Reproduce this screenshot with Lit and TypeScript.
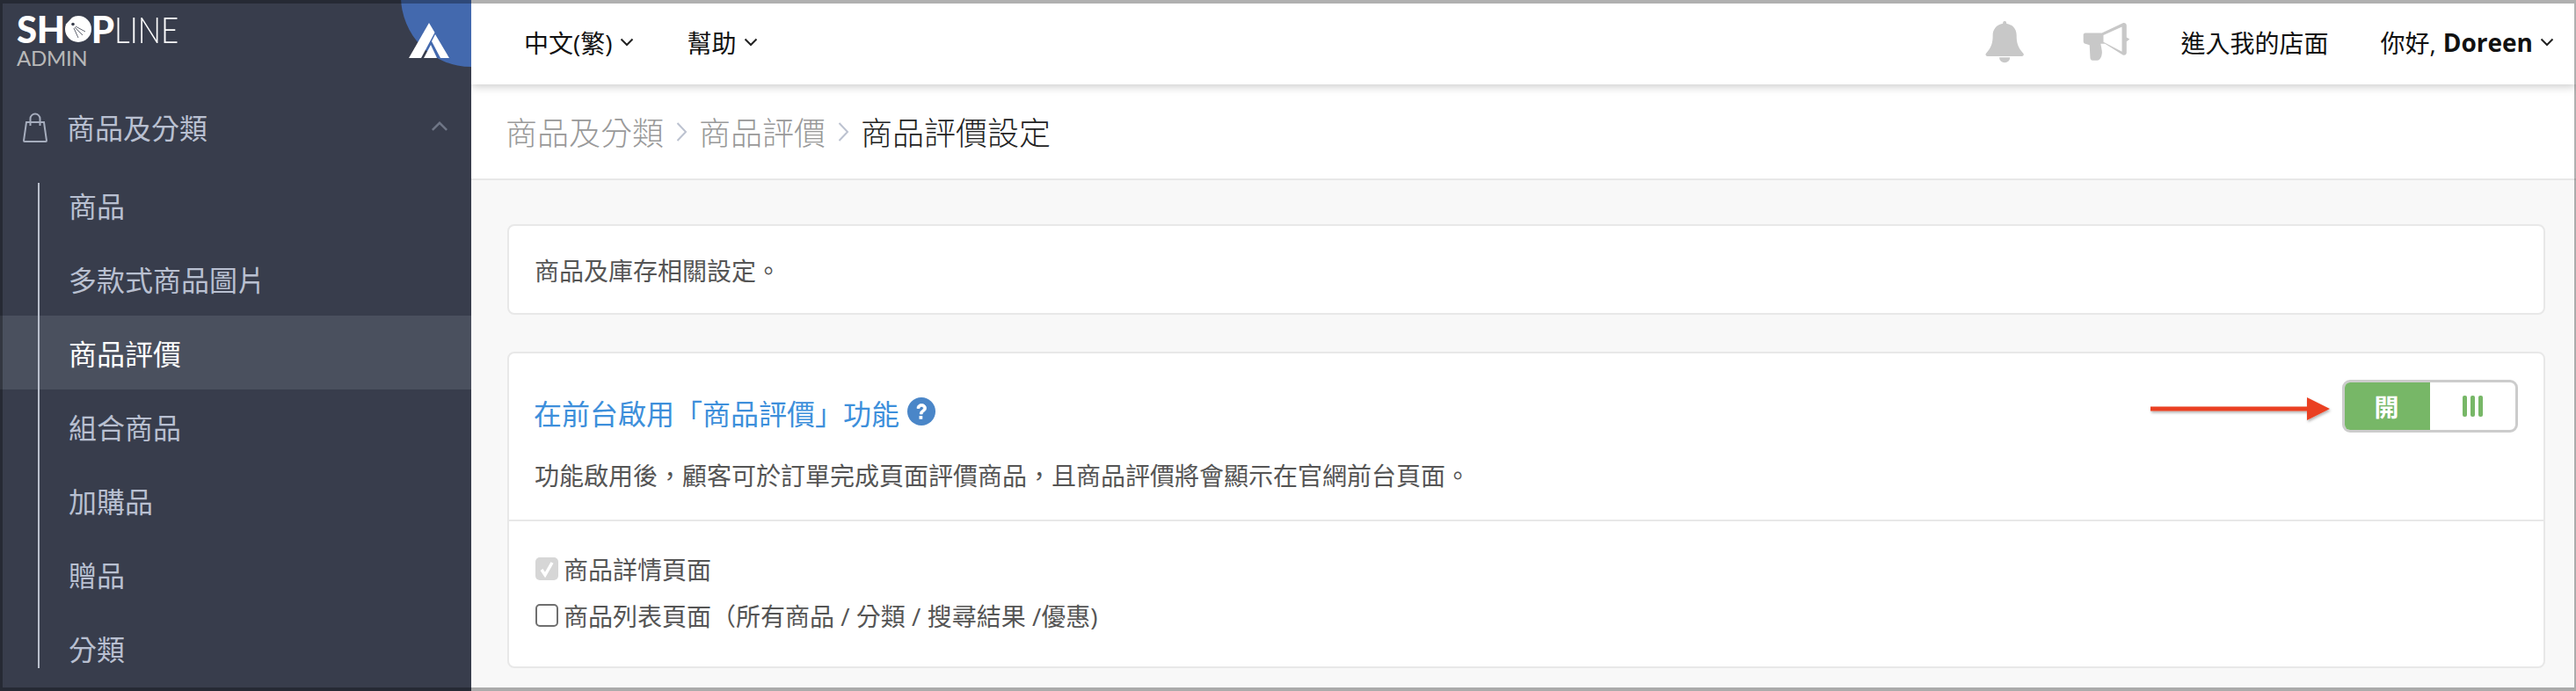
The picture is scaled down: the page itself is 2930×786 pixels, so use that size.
import { LitElement, html, css } from "lit";
import { customElement } from "lit/decorators.js";

const chevron = (cls = "chev") => html`<svg class=${cls} viewBox="0 0 16 10"><path d="M1.500 1.500 8 8l6.500-6.500" fill="none" stroke="currentColor" stroke-width="2"/></svg>`;

@customElement("app-root")
export class AppRoot extends LitElement {
  static styles = css`
    :host { display: block; width: 2930px; height: 786px; position: relative; overflow: hidden; background: #f8f8f8;
      font-family: "Open Sans", "Noto Sans CJK TC", sans-serif; color: #222; }
    * { box-sizing: border-box; }
    .frame { position: absolute; inset: 0; border-style: solid; border-color: rgba(0,0,0,.31); border-width: 4px 2px 4px 3px; pointer-events: none; z-index: 9; }
    .page { display: grid; grid-template-columns: 536px 1fr; height: 786px; }
    .side { background: #383d4c; color: #b9c0d1; position: relative; overflow: hidden; z-index: 3; }
    .brand { height: 96px; padding: 18px 0 0 19px; }
    .word { display: flex; align-items: center; height: 30px; color: #fff; font-family: Lato, sans-serif; font-size: 42px; line-height: 30px; }
    .word b { font-weight: 900; letter-spacing: -.5px; }
    .word span { font-weight: 300; margin-left: 1px; transform: scaleX(.83); transform-origin: left center; }
    .word svg { width: 30px; height: 30px; flex: none; }
    .admin { font-family: Lato, sans-serif; font-size: 24px; line-height: 24px; margin-top: 6px; color: #b8b8b8; letter-spacing: -.3px; }
    .circle { position: absolute; left: 456px; top: -84px; width: 160px; height: 160px; border-radius: 50%; background: #4369ae; }
    .mark { position: absolute; left: 465px; top: 26px; width: 46px; height: 40px; }
    .group { display: flex; align-items: center; height: 96px; padding-left: 26px; padding-right: 26px; font-size: 32px; }
    .group .bag { width: 28px; height: 34px; margin-right: 22px; margin-top: 2px; flex: none; }
    .group span { flex: 1; }
    .group .up { width: 20px; height: 13px; color: #6f7686; transform: rotate(180deg); margin-top: -2px; }
    .items { position: relative; margin-top: -1px; }
    .items::before { content: ""; position: absolute; left: 43px; top: 17px; bottom: 19px; width: 2px; background: #b9bfcc; z-index: 1; }
    .item { height: 84px; display: flex; align-items: center; padding-left: 78px; font-size: 32px; }
    .item.on { background: #4a505e; color: #fff; }
    .main { display: flex; flex-direction: column; min-width: 0; }
    .top { height: 96px; flex: none; background: #fff; box-shadow: 0 2px 10px rgba(0,0,0,.22); display: flex; align-items: center; padding: 0 25px 0 60px; font-size: 28px; position: relative; z-index: 2; color: #111; }
    .chev { width: 16px; height: 10px; margin-left: 8px; color: #222; }
    .nav { display: flex; align-items: center; }
    .nav + .nav { margin-left: 61px; }
    .spacer { flex: 1; }
    .bell { width: 46px; height: 48px; margin-right: 65px; }
    .horn { width: 54px; height: 46px; margin-right: 57px; }
    .nav.hello { margin-left: 59px; }
    .hello b { font-weight: 700; margin-left: 8px; }
    .crumb { height: 109px; flex: none; background: #fff; border-bottom: 2px solid #e8e8e8; display: flex; align-items: center; padding-left: 39px; font-size: 36px; font-weight: 300; color: #999; }
    .crumb .cur { color: #222; }
    .crumb svg { width: 13px; height: 24px; margin: 0 13px 0 14px; color: #bcc2d0; }
    .content { padding: 50px 35px 0 41px; display: flex; flex-direction: column; gap: 42px; }
    .card { background: #fff; border: 2px solid #e8e8e8; border-radius: 8px; }
    .note { height: 103px; display: flex; align-items: center; padding-left: 29px; font-size: 28px; color: #555; }
    .feature { height: 360px; display: flex; flex-direction: column; }
    .head { height: 191px; border-bottom: 2px solid #e8e8e8; padding: 29px 29px 0 29px; flex: none; }
    .row { display: flex; align-items: center; height: 62px; }
    .title { display: flex; align-items: center; font-size: 32px; color: #3d8fdb; margin: 14px 0 0 -1px; }
    .q { width: 32px; height: 32px; margin-left: 9px; margin-top: -2px; }
    .arrow { width: 210px; height: 40px; margin-right: 11px; margin-top: 6px; }
    .toggle { width: 200px; height: 60px; border: 3px solid #ccc; border-radius: 9px; overflow: hidden; display: grid; grid-template-columns: 97px 1fr; }
    .ton { background: #77b767; color: #fff; font-weight: 700; font-size: 28px; display: flex; align-items: center; justify-content: center; padding-right: 2px; }
    .toff { display: flex; align-items: center; justify-content: center; gap: 4px; }
    .toff i { width: 5px; height: 24px; background: #77b767; border-radius: 2px; }
    .desc { font-size: 28px; color: #555; line-height: 40px; margin-top: 28px; }
    .checks { padding: 34px 0 0 30px; display: flex; flex-direction: column; gap: 13px; }
    .check { display: flex; align-items: center; height: 40px; font-size: 28px; color: #555; }
    .box { width: 26px; height: 26px; border-radius: 5px; margin-right: 6px; flex: none; border: 2px solid #6f6f6f; background: #fff; }
    .box.dis { background: #d6d6d6; border: 0; display: flex; align-items: center; justify-content: center; }
    .box.dis svg { width: 18px; height: 20px; }
  `;

  render() {
    const items = ["商品", "多款式商品圖片", "商品評價", "組合商品", "加購品", "贈品", "分類"];
    return html`
      <div class="page">
        <aside class="side">
          <div class="circle"></div>
          <svg class="mark" viewBox="465 26 46 40" fill="#fff">
            <polygon points="488,26 494.500,37 479,66 465,66"/>
            <polygon points="495,39 511,66 501,66 491,47"/>
            <polygon points="490,51 497,66 482,66"/>
          </svg>
          <div class="brand">
            <div class="word"><b>SH</b><svg viewBox="0 0 30 30">
              <path d="M15 0a15 15 0 1 1-15 15c0-2 .4-4 1.200-5.800L8 2C10 .700 12.500 0 15 0z" fill="#fff"/>
              <circle cx="9" cy="9.500" r="1.800" fill="#383d4c"/>
              <path d="M10 14l5 11M11 13l9 9M12 12l11 6" stroke="#383d4c" stroke-width=".8"/>
            </svg><b>P</b><span>LINE</span></div>
            <div class="admin">ADMIN</div>
          </div>
          <div class="group">
            <svg class="bag" viewBox="0 0 28 34" fill="none" stroke="#a6adbd" stroke-width="2"><path d="M4 11h20l3 21a1 1 0 0 1-1 1H2a1 1 0 0 1-1-1z"/><path d="M8.500 15V7a5.500 5.500 0 0 1 11 0v8"/></svg>
            <span>商品及分類</span>
            ${chevron("up")}
          </div>
          <div class="items">
            ${items.map((t) => html`<div class="item ${t === "商品評價" ? "on" : ""}">${t}</div>`)}
          </div>
        </aside>
        <main class="main">
          <header class="top">
            <div class="nav">中文(繁)${chevron()}</div>
            <div class="nav">幫助${chevron()}</div>
            <div class="spacer"></div>
            <svg class="bell" viewBox="60 48 135 142" fill="#c8c8c8">
              <path d="M125 48c-5 0-6 4-6 8-22 4-34 20-34 40 0 25-4 40-22 60-4 4-2 10 4 10h116c6 0 8-6 4-10-18-20-22-35-22-60 0-20-12-36-34-40 0-4-1-8-6-8z"/>
              <path d="M107 170a18 18 0 0 0 36 0z"/>
            </svg>
            <svg class="horn" viewBox="388 55 154 130" fill="#c8c8c8">
              <path fill-rule="evenodd" d="M396 90l54 0 68-32c6-2 12 2 12 8v38l10 6-10 8v36c0 6-6 10-12 7l-58-36h-14l4 22c2 14-4 32-16 32h-14c-6 0-8-6-8-10l-2-40-14-4c-4-1-6-4-6-8V96c0-3 3-6 6-6zM455 97v22l60 32V70z"/>
            </svg>
            <div>進入我的店面</div>
            <div class="nav hello">你好,<b>Doreen</b>${chevron()}</div>
          </header>
          <div class="crumb">
            <span>商品及分類</span>
            <svg viewBox="0 0 13 24"><path d="M1.500 2 11 12l-9.500 10" fill="none" stroke="currentColor" stroke-width="2"/></svg>
            <span>商品評價</span>
            <svg viewBox="0 0 13 24"><path d="M1.500 2 11 12l-9.500 10" fill="none" stroke="currentColor" stroke-width="2"/></svg>
            <span class="cur">商品評價設定</span>
          </div>
          <div class="content">
            <section class="card note">商品及庫存相關設定。</section>
            <section class="card feature">
              <div class="head">
                <div class="row">
                  <div class="title">在前台啟用「商品評價」功能
                    <svg class="q" viewBox="0 0 32 32"><circle cx="16" cy="16" r="16" fill="#4a86c8"/><path d="M11 12.500c0-3 2.200-5 5.200-5s5.300 2 5.300 4.700c0 2.200-1.200 3.300-2.700 4.300-1.200.8-1.500 1.400-1.500 2.500h-3c0-2.200.7-3.300 2.200-4.300 1.200-.8 1.900-1.400 1.900-2.400 0-1-.9-1.900-2.200-1.900-1.400 0-2.200 1-2.200 2.100z" fill="#fff" stroke="#fff" stroke-width=".8"/><rect x="13.500" y="21" width="3.800" height="3.800" rx=".6" fill="#fff"/></svg>
                  </div>
                  <div class="spacer"></div>
                  <svg class="arrow" viewBox="0 0 210 40">
                    <defs><filter id="s" x="-5%" y="-30%" width="110%" height="170%"><feDropShadow dx="1" dy="2" stdDeviation="1.500" flood-opacity=".3"/></filter></defs>
                    <path filter="url(#s)" d="M3 17.500h178V7l26 13-26 13V22.500H3z" fill="#ea4124"/>
                  </svg>
                  <div class="toggle"><div class="ton">開</div><div class="toff"><i></i><i></i><i></i></div></div>
                </div>
                <div class="desc">功能啟用後，顧客可於訂單完成頁面評價商品，且商品評價將會顯示在官網前台頁面。</div>
              </div>
              <div class="checks">
                <div class="check"><span class="box dis"><svg viewBox="0 0 18 20"><path d="M3 11l4 6 8-14" fill="none" stroke="#fff" stroke-width="3.500"/></svg></span>商品詳情頁面</div>
                <div class="check"><span class="box"></span>商品列表頁面（所有商品 / 分類 / 搜尋結果 /優惠)</div>
              </div>
            </section>
          </div>
        </main>
      </div>
      <div class="frame"></div>
    `;
  }
}
